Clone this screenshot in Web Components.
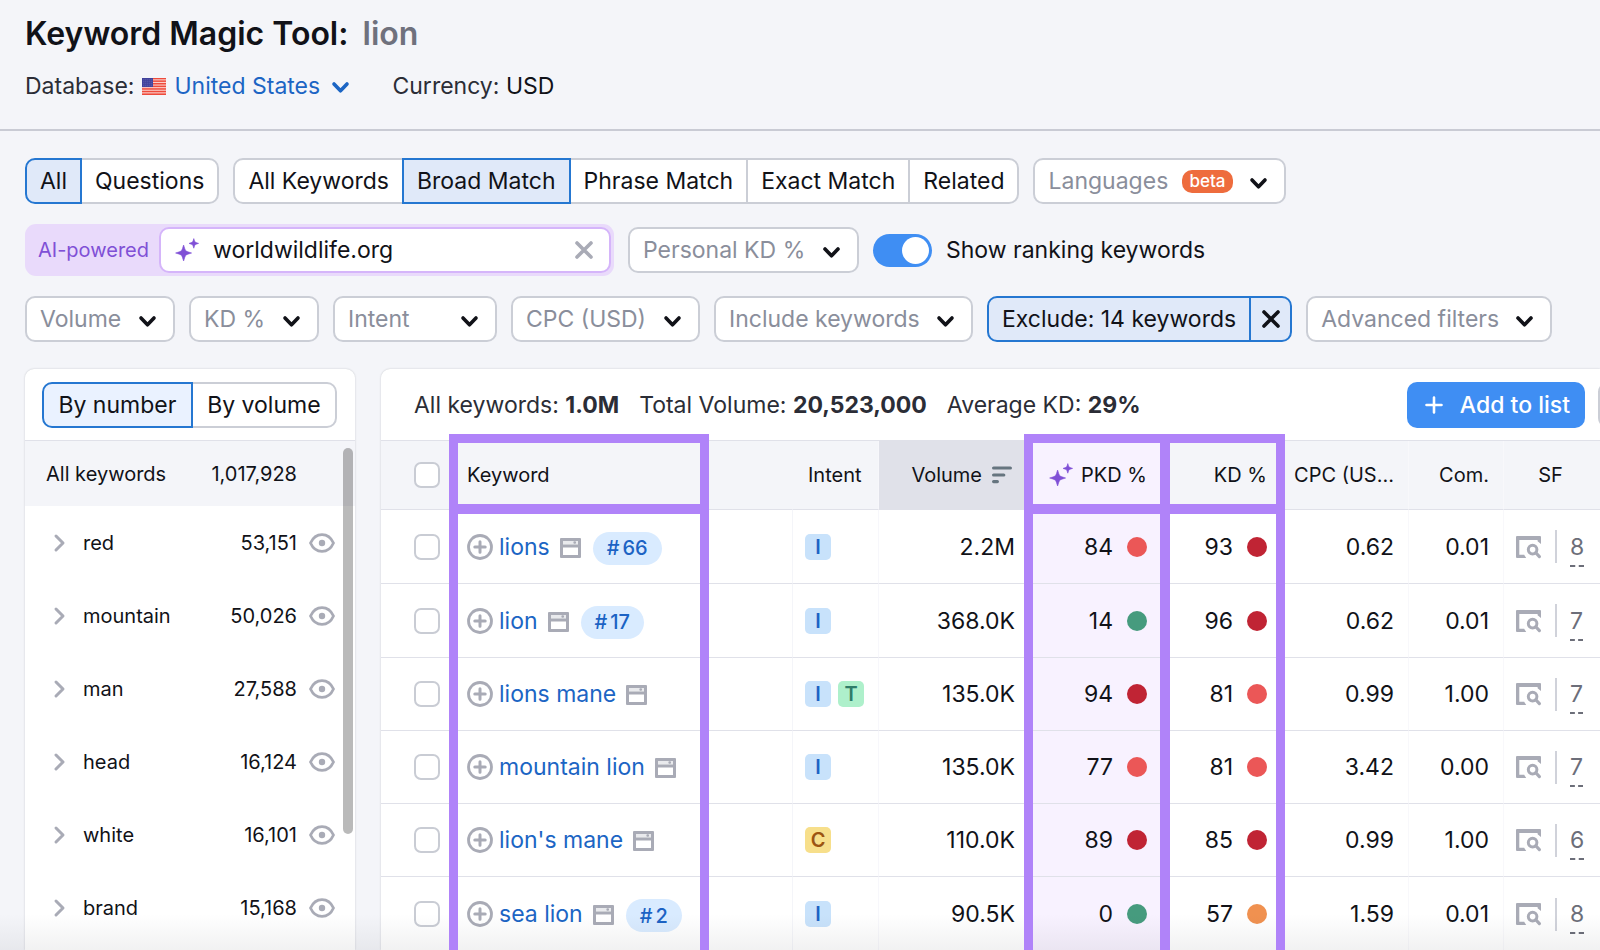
<!DOCTYPE html>
<html lang="en">
<head>
<meta charset="utf-8">
<title>Keyword Magic Tool: lion</title>
<style>
  :root {
    --bg: #f4f5f9;
    --ink: #111218;
    --muted: #8a8e9b;
    --line: #e0e1e9;
    --border: #cbced6;
    --blue: #2577d1;
    --blue-soft: #e0e9f9;
    --link: #1c65c4;
    --icon: #a9abb6;
    --violet: #8050d6;
    --mark: #b083f9;
  }
  html, body { margin: 0; height: 100%; }
  body { background: var(--bg); color: var(--ink); font: 400 23px/28px Inter, "Liberation Sans", sans-serif; }
</style>
</head>
<body>
<keyword-app></keyword-app>

<script>
const RESET = `
  *, *::before, *::after { box-sizing: border-box; }
  button, input, select { font: inherit; color: inherit; margin: 0; }
  button { cursor: pointer; }
`;

class BaseElement extends HTMLElement {
  connectedCallback() {
    if (this.shadowRoot) return;
    const root = this.attachShadow({ mode: 'open' });
    const tpl = document.createElement('template');
    tpl.innerHTML = `<style>${RESET}</style>` + this.render();
    root.append(tpl.content.cloneNode(true));
  }
}

/* ---------- icons ---------- */
const star = (x, y, r) => {
  const k = r * 0.27;
  return `<path d="M${x} ${y - r}Q${x + k * .6} ${y - k * 1.6} ${x + k} ${y - k}Q${x + k * 1.6} ${y - k * .6} ${x + r} ${y}Q${x + k * 1.6} ${y + k * .6} ${x + k} ${y + k}Q${x + k * .6} ${y + k * 1.6} ${x} ${y + r}Q${x - k * .6} ${y + k * 1.6} ${x - k} ${y + k}Q${x - k * 1.6} ${y + k * .6} ${x - r} ${y}Q${x - k * 1.6} ${y - k * .6} ${x - k} ${y - k}Q${x - k * .6} ${y - k * 1.6} ${x} ${y - r}Z" fill="currentColor" stroke="currentColor" stroke-width=".6" stroke-linejoin="round"/>`;
};
const stroke = (d, w) => `<path d="${d}" fill="none" stroke="currentColor" stroke-width="${w}" stroke-linecap="round" stroke-linejoin="round"/>`;
const ICONS = {
  down: [17, 12, stroke('M2 3L8.5 9.8L15 3', 3.6)],
  right: [11, 18, stroke('M2 2L9 9L2 16', 3)],
  close: [18, 18, stroke('M2 2L16 16M16 2L2 16', 3.6)],
  plus: [18, 18, stroke('M9 1.5V16.5M1.5 9H16.5', 2.6)],
  sparkle: [24, 24, star(8.6, 15, 8) + star(18.8, 5.4, 4.8)],
  add: [26, 26, `<circle cx="13" cy="13" r="11.5" fill="none" stroke="currentColor" stroke-width="2.8"/>` + stroke('M13 7.8V18.2M7.8 13H18.2', 3)],
  page: [21, 20, `<path fill="currentColor" fill-rule="evenodd" d="M1 0H20A1 1 0 0 1 21 1V19A1 1 0 0 1 20 20H1A1 1 0 0 1 0 19V1A1 1 0 0 1 1 0ZM3 3V6.6H18V3ZM3 9.4V17H18V9.4Z"/><rect x="3" y="3" width="15" height="3.6" fill="currentColor" opacity=".25"/><rect x="13.4" y="3.2" width="2.6" height="2.6" rx="1" fill="currentColor"/>`],
  serp: [25, 22, `<path fill="currentColor" d="M1 0H24A1 1 0 0 1 25 1V8L21.6 5.2V4H3.3V18.8H8.2Q9 20.4 10.2 22H1A1 1 0 0 1 0 21V1A1 1 0 0 1 1 0Z"/><circle cx="16.6" cy="13.6" r="4.3" fill="none" stroke="currentColor" stroke-width="3"/><path d="M20 17L23.4 20.6" stroke="currentColor" stroke-width="3.2" stroke-linecap="round"/>`],
  eye: [26, 20, `<path d="M1.5 10C4 4.4 8.5 1.6 13 1.6S22 4.4 24.5 10C22 15.6 17.5 18.4 13 18.4S4 15.6 1.5 10Z" fill="none" stroke="currentColor" stroke-width="2.8" stroke-linejoin="round"/><circle cx="13" cy="10" r="3.2" fill="currentColor"/>`],
  sort: [20, 18, stroke('M1.6 2H18.4M1.6 9H11.8M1.6 15.6H5.4', 3.2)],
  flag: [24, 17, `<rect width="24" height="17" fill="#ee4b3c"/>` +
    [1.3, 3.9, 6.5, 9.1, 11.7, 14.3].map(y => `<rect y="${y}" width="24" height="1.1" fill="#fbcfca"/>`).join('') +
    `<rect width="11" height="9" fill="#40419b"/>` +
    [1.5, 3.5, 5.5, 7.5].map(y => [1.5, 3.5, 5.5, 7.5, 9.5].map(x => `<rect x="${x}" y="${y}" width=".7" height=".7" fill="#8f90cf"/>`).join('')).join('')],
};
class KwIcon extends BaseElement {
  render() {
    const [w, h, body] = ICONS[this.getAttribute('name')];
    return `<style>:host { display: inline-flex; flex: none; } svg { display: block; overflow: visible; }</style>
      <svg width="${w}" height="${h}" viewBox="0 0 ${w} ${h}" aria-hidden="true">${body}</svg>`;
  }
}

/* ---------- segmented buttons ---------- */
class SegmentGroup extends BaseElement {
  render() {
    const active = this.getAttribute('active');
    return `<style>
      :host { display: flex; }
      .group { display: flex; flex: 1; }
      button { flex: var(--seg-flex, none); height: 46px; padding: 0 13px; border: 2px solid var(--border); background: #fff; white-space: nowrap; }
      button + button { margin-left: -2px; }
      button:first-child { border-radius: 10px 0 0 10px; }
      button:last-child { border-radius: 0 10px 10px 0; }
      button[aria-pressed="true"] { position: relative; z-index: 1; border-color: var(--blue); background: var(--seg-active, var(--blue-soft)); }
    </style>
    <div class="group" role="group" aria-label="${this.getAttribute('label')}">
      ${this.getAttribute('options').split('|').map(o => `<button type="button" aria-pressed="${o === active}">${o}</button>`).join('')}
    </div>`;
  }
}

/* ---------- drop-down filter ---------- */
class FilterSelect extends BaseElement {
  render() {
    const label = this.getAttribute('label');
    return `<style>
      :host { display: inline-flex; }
      label { display: flex; align-items: center; flex: 1; height: 46px; padding: 0 17px 0 13px; border: 2px solid var(--border); border-radius: 10px; background: #fff; }
      select { appearance: none; flex: 1; padding: 0; border: 0; outline: 0; background: none; color: var(--muted); cursor: pointer; }
      kw-icon { margin-left: 17px; margin-top: 4px; pointer-events: none; }
    </style>
    <label><select aria-label="${label}"><option>${label}</option></select><slot></slot><kw-icon name="down"></kw-icon></label>`;
  }
}

class BetaBadge extends BaseElement {
  render() {
    return `<style>
      :host { display: block; margin-left: 14px; padding: 0 7px; border-radius: 10px; background: #ee6c3d; color: #fff; font-size: 17px; font-weight: 500; line-height: 23px; }
    </style><slot></slot>`;
  }
}

class ExcludeFilter extends BaseElement {
  render() {
    return `<style>
      :host { display: inline-flex; }
      button { height: 46px; border: 2px solid var(--blue); background: var(--blue-soft); white-space: nowrap; }
      .main { padding: 0 13px; border-radius: 10px 0 0 10px; }
      .clear { display: flex; align-items: center; justify-content: center; width: 43px; margin-left: -2px; padding: 0; border-radius: 0 10px 10px 0; }
    </style>
    <button class="main" type="button"><slot></slot></button><button class="clear" type="button" aria-label="Clear excluded keywords"><kw-icon name="close"></kw-icon></button>`;
  }
}

class DomainInput extends BaseElement {
  render() {
    return `<style>
      :host { display: flex; align-items: center; width: 589px; height: 52px; padding-right: 3px; border-radius: 11px; background: #e9dafb; }
      label { padding: 0 10px 0 13px; color: var(--violet); font-size: 20px; white-space: nowrap; }
      .box { display: flex; align-items: center; flex: 1; min-width: 0; height: 46px; padding: 0 16px 0 14px; border: 2px solid #d5b5fa; border-radius: 10px; background: #fff; color: var(--violet); }
      input { flex: 1; min-width: 0; margin-left: 14px; padding: 0; border: 0; outline: 0; background: none; color: var(--ink); }
      button { display: flex; padding: 0; border: 0; background: none; color: var(--icon); }
    </style>
    <label for="domain">AI-powered</label>
    <div class="box"><kw-icon name="sparkle"></kw-icon><input id="domain" type="text" value="worldwildlife.org"><button type="button" aria-label="Clear domain"><kw-icon name="close"></kw-icon></button></div>`;
  }
}

class ToggleSwitch extends BaseElement {
  render() {
    return `<style>
      :host { display: inline-flex; }
      label { display: flex; align-items: center; gap: 14px; cursor: pointer; white-space: nowrap; }
      input { appearance: none; display: flex; align-items: center; width: 59px; height: 33px; padding: 3px; border-radius: 17px; background: #c4c7cf; }
      input::before { content: ""; width: 27px; height: 27px; border-radius: 50%; background: #fff; }
      input:checked { justify-content: flex-end; background: #3f8ef3; }
    </style>
    <label><input type="checkbox" role="switch" checked><span><slot></slot></span></label>`;
  }
}

/* ---------- page header ---------- */
class ToolHeader extends BaseElement {
  render() {
    return `<style>
      :host { display: block; padding: 14px 25px 29px; border-bottom: 2px solid #c9cbd4; }
      h1 { margin: 0 0 18px; font-size: 32px; line-height: 40px; font-weight: 600; }
      h1 span { margin-left: 6px; color: #6f717d; }
      .meta { display: flex; align-items: center; color: #2b2d36; }
      .db { display: flex; align-items: center; color: var(--link); }
      .db kw-icon[name="flag"] { margin: 0 8px; }
      .db kw-icon[name="down"] { margin-left: 12px; margin-top: 2px; }
      select { appearance: none; padding: 0; border: 0; outline: 0; background: none; color: inherit; cursor: pointer; }
      .cur { margin-left: 43px; }
      .cur b { font-weight: 400; color: var(--ink); }
    </style>
    <h1>Keyword Magic Tool: <span>lion</span></h1>
    <div class="meta">
      <label for="db">Database:</label>
      <div class="db"><kw-icon name="flag"></kw-icon><select id="db"><option>United States</option></select><kw-icon name="down"></kw-icon></div>
      <div class="cur">Currency: <b>USD</b></div>
    </div>`;
  }
}

class FilterBar extends BaseElement {
  render() {
    return `<style>
      :host { display: flex; flex-direction: column; gap: 20px; padding: 27px 25px; }
      .row { display: flex; align-items: center; gap: 14px; }
      .intent { min-width: 164px; }
    </style>
    <div class="row">
      <segment-group label="Keyword type" options="All|Questions" active="All"></segment-group>
      <segment-group label="Match type" options="All Keywords|Broad Match|Phrase Match|Exact Match|Related" active="Broad Match"></segment-group>
      <filter-select label="Languages"><beta-badge>beta</beta-badge></filter-select>
    </div>
    <div class="row">
      <domain-input></domain-input>
      <filter-select label="Personal KD %"></filter-select>
      <toggle-switch>Show ranking keywords</toggle-switch>
    </div>
    <div class="row">
      <filter-select label="Volume"></filter-select>
      <filter-select label="KD %"></filter-select>
      <filter-select class="intent" label="Intent"></filter-select>
      <filter-select label="CPC (USD)"></filter-select>
      <filter-select label="Include keywords"></filter-select>
      <exclude-filter>Exclude: 14 keywords</exclude-filter>
      <filter-select label="Advanced filters"></filter-select>
    </div>`;
  }
}

/* ---------- keyword groups ---------- */
const GROUPS = [['red', '53,151'], ['mountain', '50,026'], ['man', '27,588'], ['head', '16,124'], ['white', '16,101'], ['brand', '15,168']];
class KeywordGroups extends BaseElement {
  render() {
    return `<style>
      :host { display: block; overflow: hidden; border-radius: 9px 9px 0 0; background: #fff; box-shadow: 0 0 2px rgba(25, 27, 35, .22); font-size: 20px; }
      .top { padding: 13px 18px 12px 17px; border-bottom: 1px solid var(--line); font-size: 23px; }
      segment-group { --seg-active: #eaf2ff; --seg-flex: 1 1 auto; }
      .list { position: relative; }
      .all { display: flex; align-items: center; justify-content: space-between; height: 65px; padding: 0 58px 0 21px; background: var(--bg); }
      ul { margin: 0; padding: 0; list-style: none; }
      li { display: flex; align-items: center; height: 73px; padding: 0 20px 0 29px; }
      button { display: flex; padding: 0; border: 0; background: none; color: var(--icon); }
      .name { flex: 1; margin-left: 18px; }
      .eye { margin-left: 12px; }
      .thumb { position: absolute; top: 7px; right: 2px; width: 10px; height: 386px; border-radius: 5px; background: rgba(0, 0, 0, .27); }
    </style>
    <div class="top"><segment-group label="Group order" options="By number|By volume" active="By number"></segment-group></div>
    <div class="list">
      <div class="all"><span>All keywords</span><span>1,017,928</span></div>
      <ul>${GROUPS.map(([n, c]) => `<li>
        <button type="button" aria-label="Expand ${n}"><kw-icon name="right"></kw-icon></button>
        <span class="name">${n}</span><span>${c}</span>
        <button class="eye" type="button" aria-label="Hide ${n}"><kw-icon name="eye"></kw-icon></button></li>`).join('')}</ul>
      <div class="thumb"></div>
    </div>`;
  }
}

/* ---------- results table ---------- */
class IntentBadge extends BaseElement {
  render() {
    return `<style>
      :host { display: inline-flex; align-items: center; justify-content: center; width: 26px; height: 26px; border-radius: 5px; font-size: 20px; font-weight: 600; line-height: 26px; background: #c8e2fb; color: #1c63c4; }
      :host([kind="T"]) { background: #aef0cb; color: #2f7c68; }
      :host([kind="C"]) { background: #f7df8b; color: #9c5412; }
    </style>${this.getAttribute('kind')}`;
  }
}
class DifficultyValue extends BaseElement {
  render() {
    return `<style>
      :host { display: flex; align-items: center; justify-content: flex-end; gap: 14px; }
      i { width: 20px; height: 20px; border-radius: 50%; background: #eb5757; }
      :host([level="very-hard"]) i { background: #c02434; }
      :host([level="possible"]) i { background: #f09150; }
      :host([level="easy"]) i { background: #469b7e; }
    </style><slot></slot><i></i>`;
  }
}
class RankPill extends BaseElement {
  render() {
    return `<style>
      :host { display: inline-flex; align-items: center; gap: 3px; height: 33px; margin-top: 3px; padding: 0 14px; border-radius: 17px; background: #d9ebff; color: #1c63c4; font-size: 20px; font-weight: 500; }
    </style><span>#</span><span><slot></slot></span>`;
  }
}

const ROWS = [
  ['lions', 66, 'I', '2.2M', 84, 'hard', 93, 'very-hard', '0.62', '0.01', 8],
  ['lion', 17, 'I', '368.0K', 14, 'easy', 96, 'very-hard', '0.62', '0.01', 7],
  ['lions mane', 0, 'IT', '135.0K', 94, 'very-hard', 81, 'hard', '0.99', '1.00', 7],
  ['mountain lion', 0, 'I', '135.0K', 77, 'hard', 81, 'hard', '3.42', '0.00', 7],
  ["lion's mane", 0, 'C', '110.0K', 89, 'very-hard', 85, 'very-hard', '0.99', '1.00', 6],
  ['sea lion', 2, 'I', '90.5K', 0, 'easy', 57, 'possible', '1.59', '0.01', 8],
];
class KeywordTable extends BaseElement {
  render() {
    return `<style>
      :host { display: block; position: relative; }
      table { width: 100%; border-collapse: separate; border-spacing: 0; table-layout: fixed; }
      th, td { padding: 0; border-bottom: 1px solid var(--line); white-space: nowrap; text-align: right; }
      th { height: 69px; background: var(--bg); font-size: 20px; font-weight: 400; }
      td { height: 73px; }
      .ranked td { height: 74px; }
      tbody tr:last-child td { border-bottom: 0; }
      .check { width: 74px; padding-left: 33px; text-align: left; }
      .kw { padding-left: 12px; text-align: left; }
      .intent { width: 86px; padding-left: 12px; border-left: 1px solid #f4f5f9; text-align: left; }
      th.intent { padding-left: 15px; }
      .vol { width: 151px; padding-right: 14px; border-left: 1px solid #f7f7fb; }
      th.vol { background: var(--line); padding-right: 17px; }
      .pkd { width: 136px; padding-right: 18px; background: #f8f2ff; }
      .kd { width: 115px; padding-right: 13px; }
      .cpc { width: 128px; padding-right: 14px; }
      .com { width: 95px; padding-right: 14px; border-left: 1px solid #f8f8fb; }
      .sf { width: 97px; padding-left: 12px; border-left: 1px solid #f8f8fb; }
      th.sf { padding: 0 3px 0 0; text-align: center; }
      th .in { display: flex; align-items: center; justify-content: flex-end; gap: 10px; }
      .pkd .in { gap: 8px; }
      .pkd kw-icon { color: var(--violet); }
      .vol kw-icon { color: #66757f; }
      input { appearance: none; display: block; width: 26px; height: 26px; border: 2px solid #c9ccd4; border-radius: 7px; background: #fff; }
      .key, .badges, .features { display: flex; align-items: center; }
      .key button { display: flex; margin-right: 6px; padding: 0; border: 0; background: none; }
      .key, .features { color: var(--icon); }
      .key a { color: var(--link); text-decoration: none; }
      .key kw-icon[name="page"] { margin: 2px 12px 0 10px; }
      .badges { gap: 7px; }
      .features .rule { width: 2px; height: 33px; margin: 0 13px 0 14px; background: #d0d2da; }
      .features a { margin-top: 6px; padding-bottom: 4px; border-bottom: 2px dashed #6c6e79; color: #6c6e79; text-decoration: none; }
      .marks { position: absolute; inset: 0; z-index: 2; display: grid; grid-template: 69px 1fr / 74px 1fr 86px 151px 136px 115px 128px 95px 97px; pointer-events: none; }
      .marks i { margin: -7px -5px -4px; border: 9px solid var(--mark); }
      .marks .b { grid-row: 2; margin-top: -6px; margin-bottom: -40px; }
      .marks .h { grid-row: 1; }
      .marks .m1 { grid-column: 2; width: 260px; margin-left: -6px; }
      .marks .m2 { grid-column: 5; }
      .marks .m3 { grid-column: 6; }
    </style>
    <table>
      <thead><tr>
        <th class="check"><input type="checkbox" aria-label="Select all keywords"></th>
        <th class="kw">Keyword</th>
        <th class="intent">Intent</th>
        <th class="vol"><div class="in">Volume<kw-icon name="sort"></kw-icon></div></th>
        <th class="pkd"><div class="in"><kw-icon name="sparkle"></kw-icon>PKD %</div></th>
        <th class="kd">KD %</th>
        <th class="cpc">CPC (US...</th>
        <th class="com">Com.</th>
        <th class="sf">SF</th>
      </tr></thead>
      <tbody>${ROWS.map(([k, rank, intents, vol, pkd, pl, kd, kl, cpc, com, sf]) => `<tr${rank ? ' class="ranked"' : ''}>
        <td class="check"><input type="checkbox" aria-label="Select ${k}"></td>
        <td class="kw"><div class="key"><button type="button" aria-label="Add ${k}"><kw-icon name="add"></kw-icon></button><a href="#">${k}</a><kw-icon name="page"></kw-icon>${rank ? `<rank-pill>${rank}</rank-pill>` : ''}</div></td>
        <td class="intent"><div class="badges">${[...intents].map(i => `<intent-badge kind="${i}"></intent-badge>`).join('')}</div></td>
        <td class="vol">${vol}</td>
        <td class="pkd"><difficulty-value level="${pl}">${pkd}</difficulty-value></td>
        <td class="kd"><difficulty-value level="${kl}">${kd}</difficulty-value></td>
        <td class="cpc">${cpc}</td>
        <td class="com">${com}</td>
        <td class="sf"><div class="features"><kw-icon name="serp"></kw-icon><span class="rule"></span><a href="#">${sf}</a></div></td>
      </tr>`).join('')}</tbody>
    </table>
    <div class="marks"><i class="m1 h"></i><i class="m1 b"></i><i class="m2 h"></i><i class="m2 b"></i><i class="m3 h"></i><i class="m3 b"></i></div>`;
  }
}

class ResultsPanel extends BaseElement {
  render() {
    return `<style>
      :host { display: block; min-width: 0; overflow: hidden; border-radius: 9px 0 0 0; background: #fff; box-shadow: 0 0 2px rgba(25, 27, 35, .22); }
      .top { display: flex; align-items: center; gap: 20px; padding: 13px 0 12px 33px; border-bottom: 1px solid var(--line); color: #2b2d36; white-space: nowrap; }
      b { font-weight: 700; }
      .actions { display: flex; gap: 13px; margin-left: auto; margin-right: -44px; }
      .add { display: flex; align-items: center; gap: 17px; height: 46px; padding: 0 15px 0 18px; border: 0; border-radius: 10px; background: #3f8ef3; color: #fff; font-weight: 500; }
      .more { width: 46px; height: 46px; border: 2px solid var(--border); border-radius: 10px; background: #fff; }
    </style>
    <div class="top">
      <span>All keywords: <b>1.0M</b></span><span>Total Volume: <b>20,523,000</b></span><span>Average KD: <b>29%</b></span>
      <div class="actions"><button class="add" type="button"><kw-icon name="plus"></kw-icon>Add to list</button><button class="more" type="button" aria-label="More actions"></button></div>
    </div>
    <keyword-table></keyword-table>`;
  }
}

class KeywordApp extends BaseElement {
  render() {
    return `<style>
      :host { position: relative; display: flex; flex-direction: column; height: 100vh; overflow: hidden; }
      main { display: grid; grid-template-columns: 330px 1fr; gap: 26px; flex: 1; min-height: 0; padding-left: 25px; }
      .shade { position: absolute; left: 0; right: 0; bottom: 0; z-index: 1; height: 36px; background: linear-gradient(rgba(25, 27, 35, 0), rgba(25, 27, 35, .06)); pointer-events: none; }
    </style>
    <tool-header></tool-header>
    <filter-bar></filter-bar>
    <main><keyword-groups></keyword-groups><results-panel></results-panel></main>
    <div class="shade"></div>`;
  }
}

Object.entries({
  'kw-icon': KwIcon, 'segment-group': SegmentGroup, 'filter-select': FilterSelect, 'beta-badge': BetaBadge,
  'exclude-filter': ExcludeFilter, 'domain-input': DomainInput, 'toggle-switch': ToggleSwitch,
  'tool-header': ToolHeader, 'filter-bar': FilterBar, 'keyword-groups': KeywordGroups,
  'intent-badge': IntentBadge, 'difficulty-value': DifficultyValue, 'rank-pill': RankPill,
  'keyword-table': KeywordTable, 'results-panel': ResultsPanel, 'keyword-app': KeywordApp,
}).forEach(([name, cls]) => customElements.define(name, cls));
</script>
</body>
</html>
